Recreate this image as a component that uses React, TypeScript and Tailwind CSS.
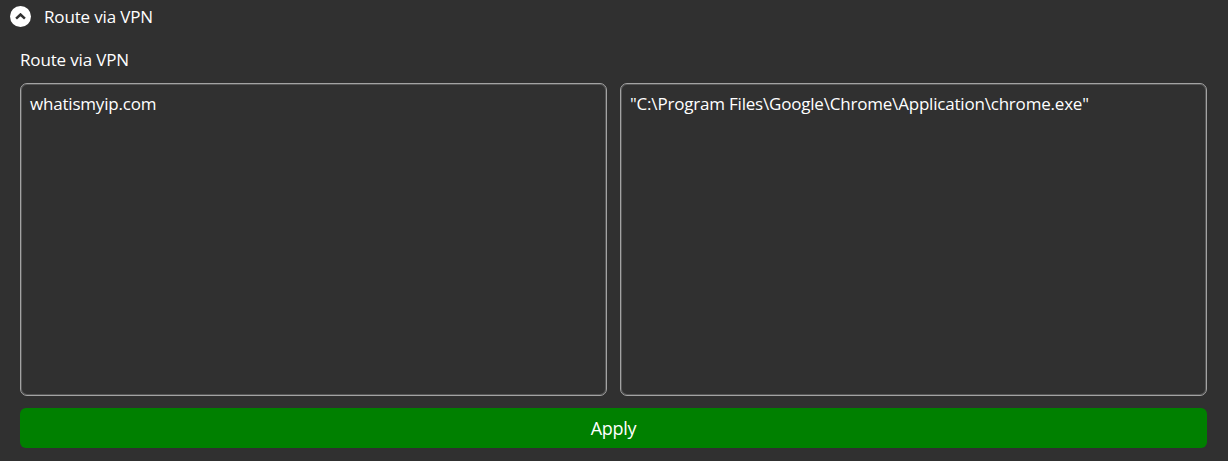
import React from 'react';

const font = "font-['Open_Sans','Noto_Sans',sans-serif]";

function RouteBox({ value }: { value: string }) {
  return (
    <div className="flex-1 h-[313px] rounded-[7px] border border-[#a3a3a3] shadow-[inset_0_0_0_1px_#565656] px-[9px] py-[8px] text-[17px] leading-[24px] text-white tracking-[-0.2px]">
      {value}
    </div>
  );
}

export default function App() {
  return (
    <div className={`${font} w-[1228px] h-[461px] bg-[#303030] overflow-hidden text-white`}>
      <div className="flex items-center h-[33px] pl-[10px] gap-[13px]">
        <div className="w-[21px] h-[21px] rounded-full bg-white flex items-center justify-center">
          <svg width="11" height="7" viewBox="0 0 11 7" fill="none">
            <path d="M1.1 5.7 L5.5 1.5 L9.9 5.7" stroke="#303030" strokeWidth="2.5" />
          </svg>
        </div>
        <span className="text-[17px] leading-[24px] tracking-[-0.15px]">Route via VPN</span>
      </div>
      <div className="pl-[20px] pr-[21px] pt-[15px]">
        <div className="text-[17px] leading-[24px] tracking-[-0.15px]">Route via VPN</div>
        <div className="flex gap-[13px] mt-[11px]">
          <RouteBox value="whatismyip.com" />
          <RouteBox value={'"C:\\Program Files\\Google\\Chrome\\Application\\chrome.exe"'} />
        </div>
        <button className="mt-[12px] w-full h-[40px] rounded-[6px] bg-[#008000] text-[18px] text-white tracking-[-0.25px]">
          Apply
        </button>
      </div>
    </div>
  );
}
